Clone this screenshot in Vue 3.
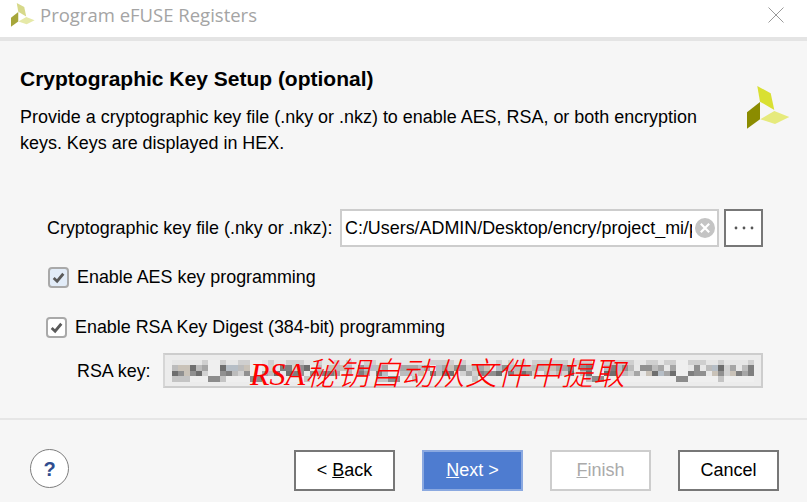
<script setup>
import { computed } from 'vue'

const logo = {
  top: '10.3,0 23.7,7.3 27.3,24 13,15.7',
  light: '27.3,25 42.3,31 28,38 13.3,33.3',
  dark: '13,16 13,33.3 0,42.7 0,26.3',
}

const shades = ['#e8e8e8', '#d2d2d2', '#bcbcbc', '#a6a6a6', '#909090', '#7e7e7e', '#6e6e6e', '#b6bec6', '#c9c2b8']
const cols = 97
const rows = 4
const gaps = [6, 7, 13, 14, 36, 37, 70, 71, 84, 85]
const cells = computed(() => {
  const out = []
  let seed = 17
  for (let r = 0; r < rows; r++) {
    for (let c = 0; c < cols; c++) {
      seed = (seed * 73 + 41) % 1009
      const inGap = gaps.includes(c)
      let color = shades[seed % shades.length]
      if (r === 3) color = seed % 6 === 0 ? '#c4c4c4' : '#efefef'
      if (r === 0) color = seed % 2 === 0 ? '#cfcfcf' : '#e6e6e6'
      if (inGap) color = r === 3 ? '#8c8c8c' : '#efefef'
      out.push(color)
    }
  }
  return out
})
</script>

<template>
  <div class="dialog">
    <header class="titlebar">
      <svg class="tlogo" viewBox="0 0 43 43" aria-hidden="true">
        <polygon :points="logo.top" fill="#d7d98a" />
        <polygon :points="logo.light" fill="#e6e9a8" />
        <polygon :points="logo.dark" fill="#a6a63a" />
      </svg>
      <span class="ttext">Program eFUSE Registers</span>
      <svg class="close" viewBox="0 0 16 16" aria-hidden="true">
        <path d="M0.5 0.5 L15.5 15.5 M15.5 0.5 L0.5 15.5" stroke="#9a9a9a" stroke-width="1" fill="none" />
      </svg>
    </header>

    <main class="body">
      <section class="hero">
        <div class="intro">
          <h1>Cryptographic Key Setup (optional)</h1>
          <p>Provide a cryptographic key file (.nky or .nkz) to enable AES, RSA, or both encryption keys. Keys are displayed in HEX.</p>
        </div>
        <svg class="blogo" viewBox="0 0 43 43" aria-hidden="true">
          <polygon :points="logo.top" fill="#d9e032" />
          <polygon :points="logo.light" fill="#e6ea7c" />
          <polygon :points="logo.dark" fill="#8b8c00" />
        </svg>
      </section>

      <section class="form">
        <div class="filerow">
          <label class="flabel">Cryptographic key file (.nky or .nkz):</label>
          <div class="input">
            <span class="ival">C:/Users/ADMIN/Desktop/encry/project_mi/p</span>
            <svg class="clear" viewBox="0 0 20 20" aria-hidden="true">
              <circle cx="10" cy="10" r="10" fill="#c4c4c4" />
              <path d="M5.8 5.8 L14.2 14.2 M14.2 5.8 L5.8 14.2" stroke="#fff" stroke-width="2.2" />
            </svg>
          </div>
          <button class="dots" type="button" aria-label="Browse">
            <svg viewBox="0 0 20 4" aria-hidden="true">
              <circle cx="2" cy="2" r="1.4" fill="#555" />
              <circle cx="10" cy="2" r="1.4" fill="#555" />
              <circle cx="18" cy="2" r="1.4" fill="#555" />
            </svg>
          </button>
        </div>

        <div class="check aes">
          <span class="box focus">
            <svg viewBox="0 0 14 14" aria-hidden="true"><path d="M2.5 7.5 L5.7 10.5 L11.5 3.5" fill="none" stroke="#5a5a5a" stroke-width="2.6" /></svg>
          </span>
          <span>Enable AES key programming</span>
        </div>

        <div class="check rsa">
          <span class="box">
            <svg viewBox="0 0 14 14" aria-hidden="true"><path d="M2.5 7.5 L5.7 10.5 L11.5 3.5" fill="none" stroke="#5a5a5a" stroke-width="2.6" /></svg>
          </span>
          <span>Enable RSA Key Digest (384-bit) programming</span>
        </div>

        <div class="keyrow">
          <span class="klabel">RSA key:</span>
          <div class="kfield">
            <div class="mosaic">
              <i v-for="(c, i) in cells" :key="i" :style="{ background: c }"></i>
            </div>
            <span class="note">RSA秘钥自动从文件中提取</span>
          </div>
        </div>
      </section>
    </main>

    <footer class="foot">
      <button class="help" type="button">?</button>
      <div class="btns">
        <button class="btn" type="button">&lt; <u>B</u>ack</button>
        <button class="btn primary" type="button"><u>N</u>ext &gt;</button>
        <button class="btn off" type="button"><u>F</u>inish</button>
        <button class="btn" type="button">Cancel</button>
      </div>
    </footer>
  </div>
</template>

<style scoped>
.dialog {
  width: 807px;
  height: 502px;
  display: flex;
  flex-direction: column;
  background: #f6f6f6;
  font-family: "Liberation Sans", Arial, sans-serif;
  font-size: 17.9px;
  color: #000;
  overflow: hidden;
}
.titlebar {
  height: 37px;
  flex: none;
  box-sizing: content-box;
  display: flex;
  align-items: center;
  background: #fff;
  border-bottom: 4px solid #e4e4e4;
  padding-left: 11px;
  padding-right: 23px;
}
.tlogo {
  width: 24px;
  height: 24px;
  margin-right: 5px;
  margin-top: -8px;
}
.ttext {
  font-family: "Open Sans", sans-serif;
  font-size: 18.5px;
  color: #a4a4a4;
  flex: 1;
  margin-top: -8px;
}
.close {
  width: 16px;
  height: 16px;
  margin-top: -7px;
}
.body {
  flex: 1;
  display: flex;
  flex-direction: column;
  padding: 26px 44px 0 20px;
}
.hero {
  display: flex;
  align-items: flex-start;
  height: 142px;
}
.intro {
  width: 690px;
  flex: none;
}
h1 {
  margin: 0;
  font-size: 21px;
  line-height: 24px;
  font-weight: 700;
  white-space: nowrap;
}
p {
  margin: 13px 0 0;
  line-height: 26px;
  font-size: 17.95px;
}
.blogo {
  width: 43px;
  height: 43px;
  margin-left: 37px;
  margin-top: 19px;
  flex: none;
}
.form {
  display: flex;
  flex-direction: column;
}
.filerow {
  display: flex;
  align-items: center;
  height: 38px;
  padding-left: 27px;
}
.flabel {
  width: 293px;
  white-space: nowrap;
}
.input {
  width: 379px;
  height: 38px;
  box-sizing: border-box;
  display: flex;
  align-items: center;
  background: #fff;
  border: 2px solid #cdcdcd;
  padding: 0 2px 0 3px;
  margin-right: 5px;
}
.ival {
  flex: 1;
  min-width: 0;
  height: 20px;
  line-height: 20px;
  overflow: hidden;
  white-space: nowrap;
  margin-right: 3px;
}
.clear {
  width: 20px;
  height: 20px;
  flex: none;
}
.dots {
  width: 39px;
  height: 38px;
  padding: 0;
  background: #fff;
  border: 2px solid #777;
  display: flex;
  align-items: center;
  justify-content: center;
}
.dots svg {
  width: 20px;
  height: 4px;
}
.check {
  display: flex;
  align-items: center;
  height: 22px;
  white-space: nowrap;
}
.aes {
  margin-top: 19px;
  margin-left: 28px;
  gap: 8px;
}
.rsa {
  margin-top: 28px;
  margin-left: 26px;
  gap: 8px;
}
.box {
  width: 21px;
  height: 21px;
  box-sizing: border-box;
  border: 2px solid #a9a9a9;
  border-radius: 4px;
  background: #fff;
  display: flex;
  align-items: center;
  justify-content: center;
  flex: none;
}
.box.focus {
  background: #e2ecf8;
}
.box svg {
  width: 15px;
  height: 15px;
}
.keyrow {
  display: flex;
  align-items: center;
  margin-top: 15px;
  padding-left: 57px;
}
.klabel {
  width: 86px;
  padding-top: 1px;
}
.kfield {
  position: relative;
  width: 600px;
  height: 35px;
  box-sizing: border-box;
  background: #ececec;
  border: 2px solid #cdcdcd;
  border-left-color: #d6d6d6;
  display: flex;
  align-items: center;
  padding-left: 7px;
}
.mosaic {
  display: grid;
  grid-template-columns: repeat(97, 6px);
  grid-template-rows: repeat(4, 5.5px);
  filter: blur(0.4px);
}
.mosaic i {
  display: block;
}
.note {
  position: absolute;
  left: 85px;
  top: 2px;
  font-family: "Liberation Serif", "Noto Sans CJK SC", serif;
  font-style: italic;
  font-weight: 300;
  font-size: 32px;
  line-height: 35px;
  color: #ff0000;
  white-space: nowrap;
}
.foot {
  flex: none;
  height: 84px;
  box-sizing: border-box;
  border-top: 2px solid #e6e6e6;
  display: flex;
  align-items: flex-start;
  justify-content: space-between;
  padding: 30px 28px 0 30px;
}
.help {
  width: 39px;
  height: 39px;
  padding: 0;
  margin-top: -1px;
  border-radius: 50%;
  border: 1px solid #7d7d7d;
  background: #fff;
  color: #2f4d8f;
  font: 700 20px/1 "Liberation Sans", sans-serif;
}
.btns {
  display: flex;
  gap: 27px;
}
.btn {
  width: 101px;
  height: 41px;
  padding: 0;
  box-sizing: border-box;
  background: #fff;
  border: 2px solid #777;
  font: 400 18px "Liberation Sans", sans-serif;
  color: #000;
}
.primary {
  background: #4e7cd0;
  border-color: #8ba9e0;
  color: #fff;
}
.off {
  border-color: #cdcdcd;
  color: #aaa;
}
</style>

<style>
html, body { margin: 0; padding: 0; background: #f6f6f6; }
</style>
